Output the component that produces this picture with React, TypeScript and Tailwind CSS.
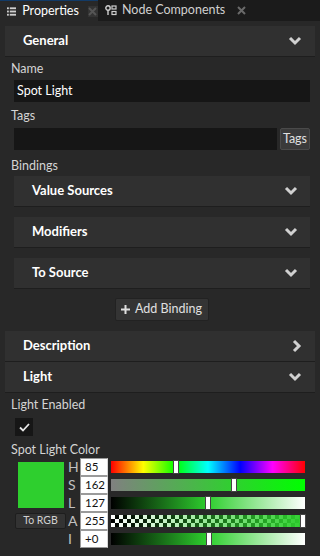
import React from "react";

const font = { fontFamily: 'Lato, "Noto Sans", sans-serif' };

function ChevronDown() {
  return (
    <svg width="14" height="10" viewBox="0 0 14 10">
      <polyline points="2,2 7,7 12,2" fill="none" stroke="#d0d0d0" strokeWidth="3" />
    </svg>
  );
}

function ChevronRight() {
  return (
    <svg width="10" height="14" viewBox="0 0 10 14">
      <polyline points="2,2 7,7 2,12" fill="none" stroke="#d0d0d0" strokeWidth="3" />
    </svg>
  );
}

function CloseX({ dim }: { dim?: boolean }) {
  return (
    <svg width="9" height="9" viewBox="0 0 9 9">
      <path d="M1 1 L8 8 M8 1 L1 8" stroke={dim ? "#555" : "#6a6a6a"} strokeWidth="2" />
    </svg>
  );
}

function Section({ title, open = true }: { title: string; open?: boolean }) {
  return (
    <div className="mx-[5px] h-[31px] bg-[#303030] border-b border-[#1e1e1e] flex items-center justify-between pl-[18px] pr-[13px]">
      <span className="text-[13px] font-bold text-white">{title}</span>
      {open ? <ChevronDown /> : <ChevronRight />}
    </div>
  );
}

function SubSection({ title }: { title: string }) {
  return (
    <div className="ml-[14px] mr-[10px] h-[31px] bg-[#303030] border-b border-[#1e1e1e] flex items-center justify-between pl-[18px] pr-[12px]">
      <span className="text-[13px] font-bold text-white">{title}</span>
      <ChevronDown />
    </div>
  );
}

function Label({ children }: { children: React.ReactNode }) {
  return <div className="pl-[11px] text-[12.5px] text-[#d4d4d4] leading-[16px]">{children}</div>;
}

function Handle({ left }: { left: number }) {
  return (
    <div
      className="absolute top-[-1px] h-[14px] w-[6px] bg-white border border-[#444]"
      style={{ left: `calc(${left}% - 3px)` }}
    />
  );
}

const rows = [
  { k: "H", v: "85" },
  { k: "S", v: "162" },
  { k: "L", v: "127" },
  { k: "A", v: "255" },
  { k: "I", v: "+0" },
];

export default function App() {
  return (
    <div className="w-[320px] h-[556px] bg-[#282828] overflow-hidden text-[#d4d4d4]" style={font}>
      {/* tabs */}
      <div className="h-[21px] bg-[#1b1b1b] flex">
        <div className="w-[98px] bg-[#282828] border-t border-[#123a66] flex items-center pl-[7px]">
          <svg width="10" height="9" viewBox="0 0 10 9">
            <rect x="0" y="0" width="2" height="2" fill="#cfcfcf" />
            <rect x="3" y="0" width="7" height="2" fill="#cfcfcf" />
            <rect x="0" y="3.5" width="2" height="2" fill="#cfcfcf" />
            <rect x="3" y="3.5" width="7" height="2" fill="#cfcfcf" />
            <rect x="0" y="7" width="2" height="2" fill="#cfcfcf" />
            <rect x="3" y="7" width="7" height="2" fill="#cfcfcf" />
          </svg>
          <span className="ml-[6px] text-[12.5px] text-white leading-none">Properties</span>
          <span className="ml-[9px] w-[11px] h-[11px] bg-[#333] flex items-center justify-center">
            <CloseX dim />
          </span>
        </div>
        <div className="flex items-center pl-[7px]">
          <svg width="12" height="11" viewBox="0 0 12 11">
            <circle cx="3" cy="3" r="2.2" fill="none" stroke="#cfcfcf" strokeWidth="1.4" />
            <rect x="2.3" y="5" width="1.4" height="5" fill="#cfcfcf" />
            <rect x="7" y="1" width="4" height="3" fill="none" stroke="#cfcfcf" strokeWidth="1.2" />
            <rect x="7" y="6.5" width="4" height="3" fill="none" stroke="#cfcfcf" strokeWidth="1.2" />
          </svg>
          <span className="ml-[5px] text-[12.5px] text-[#d0d0d0] leading-none">Node Components</span>
          <span className="ml-[12px] flex items-center">
            <CloseX />
          </span>
        </div>
      </div>

      <div className="pt-[5px]">
        <Section title="General" />

        <div className="mt-[4px]">
          <Label>Name</Label>
          <div className="mt-[3px] ml-[14px] mr-[10px] h-[22px] bg-[#161616] flex items-center pl-[3px] text-[12.5px] text-white">
            Spot Light
          </div>
        </div>

        <div className="mt-[6px]">
          <Label>Tags</Label>
          <div className="mt-[4px] ml-[14px] mr-[10px] flex gap-[3px]">
            <div className="flex-1 h-[22px] bg-[#161616]" />
            <div className="w-[30px] h-[22px] bg-[#3a3a3a] border border-[#4a4a4a] rounded-[2px] flex items-center justify-center text-[12.5px] text-[#e0e0e0]">
              Tags
            </div>
          </div>
        </div>

        <div className="mt-[8px]">
          <Label>Bindings</Label>
          <div className="mt-[2px] flex flex-col gap-[10px]">
            <SubSection title="Value Sources" />
            <SubSection title="Modifiers" />
            <SubSection title="To Source" />
          </div>
        </div>

        <div className="flex justify-center mt-[9px] pl-[3px]">
          <div className="w-[94px] h-[23px] bg-[#343434] border border-[#222] rounded-[2px] flex items-center justify-center gap-[5px] text-[12.5px] text-[#e0e0e0]">
            <svg width="9" height="9" viewBox="0 0 9 9">
              <path d="M4.5 0 V9 M0 4.5 H9" stroke="#e0e0e0" strokeWidth="2" />
            </svg>
            Add Binding
          </div>
        </div>

        <div className="mt-[10px]">
          <Section title="Description" open={false} />
          <Section title="Light" />
        </div>

        <div className="mt-[4px]">
          <Label>Light Enabled</Label>
          <div className="mt-[5px] ml-[15px] w-[18px] h-[18px] bg-[#161616] flex items-center justify-center">
            <svg width="11" height="9" viewBox="0 0 11 9">
              <polyline points="1,4.5 4,7.5 10,1" fill="none" stroke="#e8e8e8" strokeWidth="1.8" />
            </svg>
          </div>
        </div>

        <div className="mt-[6px]">
          <Label>Spot Light Color</Label>
          <div className="flex">
            <div className="w-[68px] flex flex-col items-start pl-[15px] pt-[4px]">
              <div className="ml-[3px] w-[46px] h-[46px] bg-[#2ecf2e]" />
              <div className="mt-[5px] w-[51px] h-[16px] bg-[#333] border border-[#1e1e1e] rounded-[2px] flex items-center justify-center text-[10.5px] text-[#d0d0d0]">
                To RGB
              </div>
            </div>
            <div className="flex flex-col">
              {rows.map((r) => (
                <div key={r.k} className="flex items-center h-[18px]">
                  <span className="w-[12px] text-[14px] text-[#c0c0c0] leading-none">{r.k}</span>
                  <div className="w-[28px] h-[18px] bg-white border border-[#9a9a9a] border-r-[#d8d8d8] flex items-center pl-[4px] text-[11.5px] text-[#111]">
                    {r.v}
                  </div>
                  <div className="ml-[3px] w-[194px] h-[12px] relative">
                    {r.k === "H" && (
                      <div className="absolute inset-0 bg-[linear-gradient(to_right,#ff0000,#ffff00,#00ff00,#00ffff,#0000ff,#ff00ff,#ff0000)]" />
                    )}
                    {r.k === "S" && (
                      <div className="absolute inset-0 bg-[linear-gradient(to_right,#808080,#00ff00)]" />
                    )}
                    {(r.k === "L" || r.k === "I") && (
                      <div className="absolute inset-0 bg-[linear-gradient(to_right,#000000,#2ecf2e,#ffffff)]" />
                    )}
                    {r.k === "A" && (
                      <div className="absolute inset-0 bg-[conic-gradient(#000_25%,#fff_0_50%,#000_0_75%,#fff_0)] bg-[length:8px_8px]">
                        <div className="absolute inset-0 bg-[linear-gradient(to_right,rgba(46,207,46,0),#2ecf2e)]" />
                      </div>
                    )}
                    {r.k === "H" && <Handle left={33.3} />}
                    {r.k === "S" && <Handle left={63.5} />}
                    {r.k === "L" && <Handle left={49.8} />}
                    {r.k === "A" && <Handle left={99} />}
                    {r.k === "I" && <Handle left={50.5} />}
                  </div>
                </div>
              ))}
            </div>
          </div>
        </div>
      </div>
    </div>
  );
}
